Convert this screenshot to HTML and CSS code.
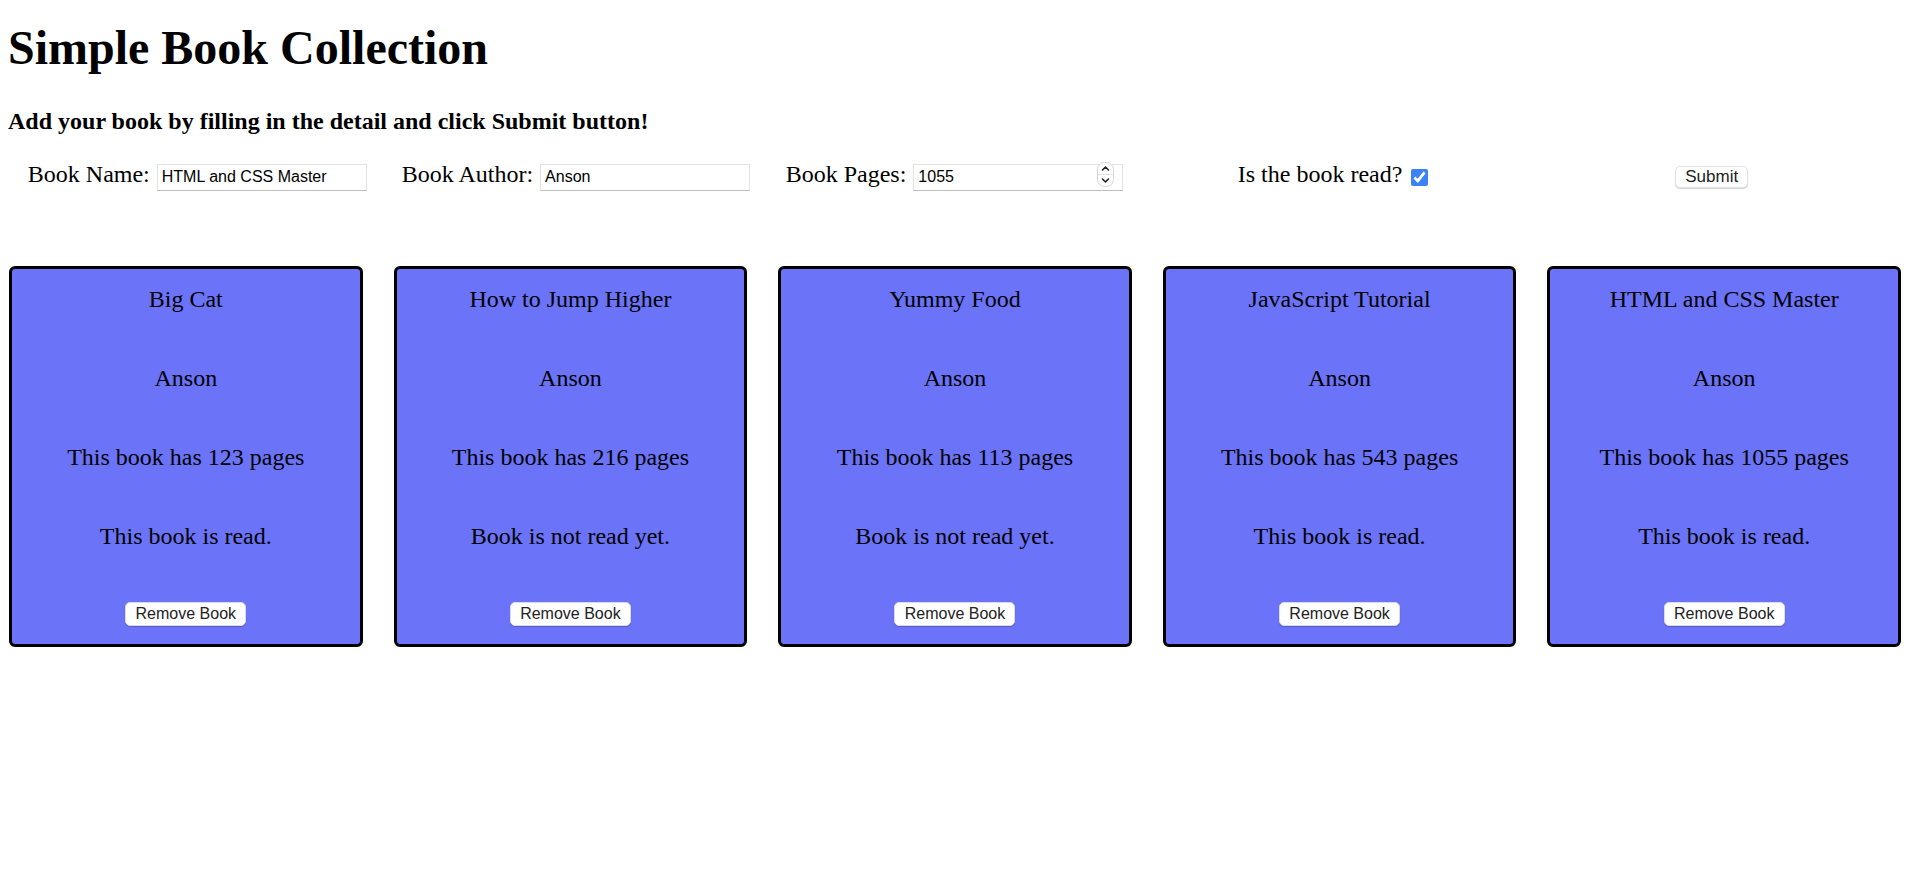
FILE: index.html
```html
<!DOCTYPE html>
<html lang="en">
<head>
    <meta charset="UTF-8">
    <meta name="viewport" content="width=device-width, initial-scale=1.0">
    <title>Simple Book Collection</title>
    <link rel="stylesheet" href="styles.css">
</head>
<body>
    <h1 class="title">Simple Book Collection</h1>
    <h3 class="subtitle">Add your book by filling in the detail and click Submit button!</h3>

    <form class="book-form" onsubmit="return false;">
        <div class="field">
            <label for="bookName">Book Name:</label>
            <input type="text" id="bookName" class="text-input" value="HTML and CSS Master">
        </div>
        <div class="field">
            <label for="bookAuthor">Book Author:</label>
            <input type="text" id="bookAuthor" class="text-input" value="Anson">
        </div>
        <div class="field">
            <label for="bookPages">Book Pages:</label>
            <span class="number-wrap">
                <input type="number" id="bookPages" class="text-input" value="1055">
                <svg class="spinner" width="17" height="25" viewBox="0 0 17 25">
                    <rect x="0.5" y="0.5" width="16" height="24" rx="7" fill="#fff" stroke="#d6d6d6"/>
                    <line x1="1" y1="12.5" x2="16" y2="12.5" stroke="#e2e2e2"/>
                    <path d="M5.5 8 L8.5 5 L11.5 8" fill="none" stroke="#222" stroke-width="1.6" stroke-linecap="round" stroke-linejoin="round"/>
                    <path d="M5.5 17 L8.5 20 L11.5 17" fill="none" stroke="#222" stroke-width="1.6" stroke-linecap="round" stroke-linejoin="round"/>
                </svg>
            </span>
        </div>
        <div class="field field-check">
            <label for="bookRead">Is the book read?</label>
            <input type="checkbox" id="bookRead" checked>
        </div>
        <div class="field">
            <button type="submit" class="submit-btn">Submit</button>
        </div>
    </form>

    <div class="library">
        <div class="book-card">
            <p>Big Cat</p>
            <p>Anson</p>
            <p>This book has 123 pages</p>
            <p>This book is read.</p>
            <button class="remove-btn">Remove Book</button>
        </div>
        <div class="book-card">
            <p>How to Jump Higher</p>
            <p>Anson</p>
            <p>This book has 216 pages</p>
            <p>Book is not read yet.</p>
            <button class="remove-btn">Remove Book</button>
        </div>
        <div class="book-card">
            <p>Yummy Food</p>
            <p>Anson</p>
            <p>This book has 113 pages</p>
            <p>Book is not read yet.</p>
            <button class="remove-btn">Remove Book</button>
        </div>
        <div class="book-card">
            <p>JavaScript Tutorial</p>
            <p>Anson</p>
            <p>This book has 543 pages</p>
            <p>This book is read.</p>
            <button class="remove-btn">Remove Book</button>
        </div>
        <div class="book-card">
            <p>HTML and CSS Master</p>
            <p>Anson</p>
            <p>This book has 1055 pages</p>
            <p>This book is read.</p>
            <button class="remove-btn">Remove Book</button>
        </div>
    </div>
</body>
</html>
```

FILE: styles.css
```css
body {
    margin: 0;
    padding: 8px;
    font-family: "Liberation Serif", "Times New Roman", serif;
    font-size: 24px;
    color: #000;
    background: #fff;
}
.title {
    font-size: 48px;
    margin: 12px 0 33px;
}
.subtitle {
    font-size: 24px;
    margin: 0 0 26px;
}
.book-form {
    display: grid;
    grid-template-columns: repeat(5, 1fr);
    align-items: baseline;
    justify-items: center;
}
.field {
    display: flex;
    align-items: baseline;
    gap: 7px;
}
.field-check {
    align-items: center;
    gap: 9px;
}
.text-input {
    width: 210px;
    height: 27px;
    box-sizing: border-box;
    margin: 0;
    padding: 0 4px;
    border: 1px solid #e3e3e3;
    border-bottom-color: #bdbdbd;
    border-radius: 0;
    font-family: "Liberation Sans", Arial, sans-serif;
    font-size: 16px;
    color: #000;
    background: #fff;
    outline: none;
}
.number-wrap {
    position: relative;
    display: inline-block;
}
.text-input[type=number] {
    -moz-appearance: textfield;
}
.text-input[type=number]::-webkit-inner-spin-button,
.text-input[type=number]::-webkit-outer-spin-button {
    -webkit-appearance: none;
    margin: 0;
}
.spinner {
    position: absolute;
    right: 9px;
    top: 1px;
}
#bookRead {
    width: 17px;
    height: 17px;
    margin: 6px 0 0;
    accent-color: #3b82f6;
}
.submit-btn {
    height: 22px;
    padding: 0 9px;
    border: 1px solid #e2e2e2;
    border-radius: 5px;
    background: #fff;
    box-shadow: 0 1px 1px rgba(0, 0, 0, 0.18);
    font-family: "Liberation Sans", Arial, sans-serif;
    font-size: 17px;
    line-height: 19px;
    color: #222;
}
.library {
    display: grid;
    grid-template-columns: repeat(5, 1fr);
    column-gap: 31px;
    margin: 75px 0 0 1px;
}
.book-card {
    display: flex;
    flex-direction: column;
    align-items: center;
    gap: 52px;
    padding: 17px 0 18px;
    background-color: #6b73f8;
    border: 3px solid #000;
    border-radius: 6px;
    text-align: center;
}
.book-card p {
    margin: 0;
}
.remove-btn {
    width: 121px;
    height: 24px;
    padding: 0;
    border: 1px solid #dcdcdc;
    border-radius: 5px;
    background: #fff;
    box-shadow: 0 1px 1px rgba(0, 0, 0, 0.2);
    font-family: "Liberation Sans", Arial, sans-serif;
    font-size: 16px;
    color: #222;
}
```
